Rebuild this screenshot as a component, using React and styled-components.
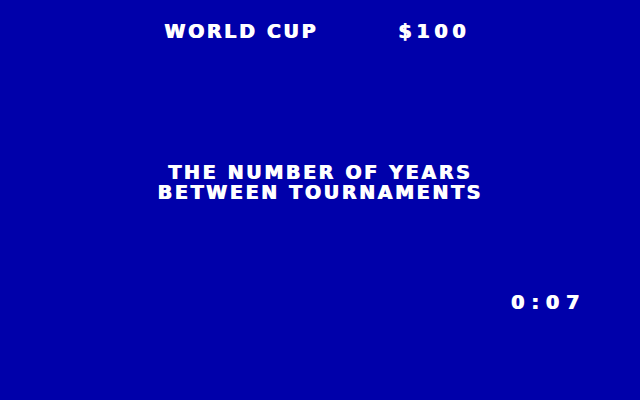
import React from "react";
import styled, { createGlobalStyle } from "styled-components";

const GlobalStyle = createGlobalStyle`
  html, body {
    margin: 0;
    padding: 0;
    background: #0000aa;
  }
`;

const Screen = styled.div`
  width: 640px;
  height: 400px;
  box-sizing: border-box;
  padding: 21px 58px 0 0;
  display: flex;
  flex-direction: column;
  background: #0000aa;
  color: #ffffff;
  font-family: "DejaVu Sans", "Liberation Sans", sans-serif;
  font-weight: bold;
  font-size: 19px;
  line-height: 20px;
  letter-spacing: 2.7px;
  text-transform: uppercase;
  text-shadow: 1px 0 0 #ffffff;
  -webkit-font-smoothing: none;
`;

const Header = styled.div`
  display: flex;
  justify-content: center;
  gap: 80px;
  padding-left: 52px;
`;

const Digits = styled.span`
  letter-spacing: ${(p) => p.$spacing}px;
`;

const Question = styled.div`
  margin-top: 121px;
  padding-left: 58px;
  text-align: center;
`;

const Timer = styled(Digits)`
  display: block;
  margin-top: 90px;
  margin-right: -4px;
  align-self: flex-end;
`;

export default function App() {
  return (
    <>
      <GlobalStyle />
      <Screen>
        <Header>
          <span>World Cup</span>
          <Digits $spacing={4.8}>$100</Digits>
        </Header>
        <Question>
          The number of years
          <br />
          between tournaments
        </Question>
        <Timer $spacing={7}>0:07</Timer>
      </Screen>
    </>
  );
}
